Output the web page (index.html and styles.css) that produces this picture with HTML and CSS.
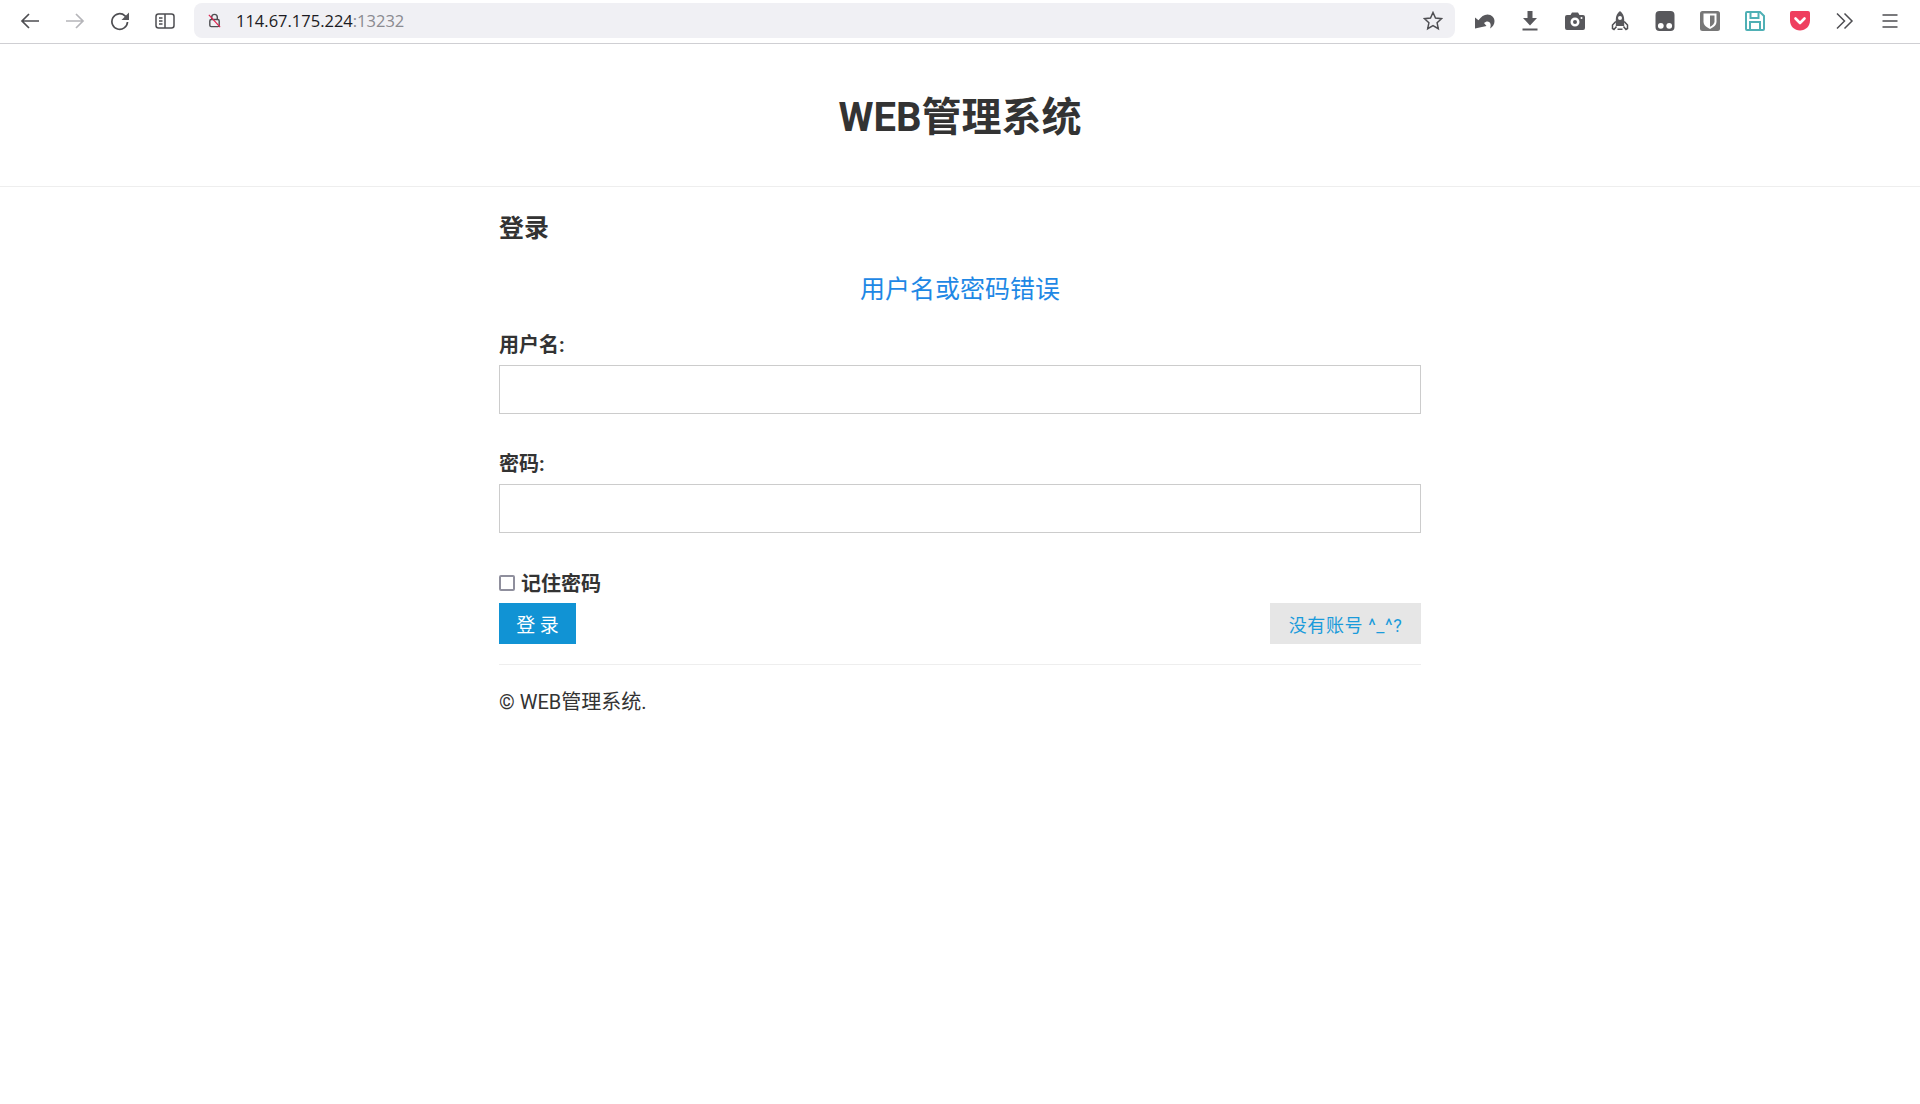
FILE: index.html
```html
<!DOCTYPE html>
<html lang="zh-CN">
<head>
<meta charset="utf-8">
<title>WEB管理系统</title>
<link rel="stylesheet" href="styles.css">
</head>
<body>
<nav class="toolbar">
  <div class="nav-group">
    <svg class="ico" viewBox="0 0 20 20"><path d="M19 10H2M9 3 2 10l7 7" class="st"/></svg>
    <svg class="ico" viewBox="0 0 20 20"><path d="M1 10h17M11 3l7 7-7 7" class="st light"/></svg>
    <svg class="ico" viewBox="0 0 20 20"><path d="M17.500 11a7.800 7.800 0 1 1-2.500-6.200L17.500 7.500" class="st"/><path d="M19 1.500v7.500h-7.500z" class="fill"/></svg>
    <svg class="ico" viewBox="0 0 20 20"><rect x="1" y="3" width="18" height="14" rx="2.500" class="st thin"/><path d="M10 3v14M4 7H7.500M4 10H7.500M4 13H7.500" class="st thin"/></svg>
  </div>
  <div class="urlbar">
    <svg class="lock" viewBox="0 0 16 16"><rect x="3" y="7" width="10" height="7.500" rx="1.500" class="st thin"/><path d="M5 7V4.500a3 3 0 0 1 6 0V7" class="st thin"/><path d="M2 2l12 13" class="slash"/></svg>
    <span class="host">114.67.175.224</span><span class="port">:13232</span>
    <svg class="ico star" viewBox="0 0 20 20"><path d="m10 1.500 2.500 5.500 6 .7-4.400 4.100 1.200 5.900-5.300-3-5.300 3 1.200-5.900L1.500 7.700l6-.7z" class="st thin"/></svg>
  </div>
  <div class="ext-group">
    <svg class="ico" viewBox="0 0 20 20"><path d="M0 17.500V6.500l3.500 2.800C6 5.800 9 3.500 12.500 3.500c4 0 7 3 7 6.500 0 3-1.500 5.500-4.500 7.500 1-2.500 1-5-.5-6.300-1.800-1.200-3.800-.7-5.500.9l2.500 2.800z" class="fill"/></svg>
    <svg class="ico" viewBox="0 0 20 20"><path d="M7.500 0h5v7H17l-7 7.500L3 7h4.500zM2.500 17.500h15v2h-15z" class="fill"/></svg>
    <svg class="ico" viewBox="0 0 20 20"><path fill-rule="evenodd" d="M7 1.500h6L14.500 4H18a2 2 0 0 1 2 2v11a2 2 0 0 1-2 2H2a2 2 0 0 1-2-2V6a2 2 0 0 1 2-2h3.500zM10 6.500a4.500 4.500 0 1 0 0 9 4.500 4.500 0 0 0 0-9zm0 2.500a2 2 0 1 1 0 4 2 2 0 0 1 0-4zM16.500 6a1 1 0 1 0 0 2 1 1 0 0 0 0-2z" class="fill"/></svg>
    <svg class="ico" viewBox="0 0 20 20"><path fill-rule="evenodd" d="M10 0c2.800 2 4.200 5 4.200 8.500V15H5.800V8.500C5.800 5 7.200 2 10 0zm0 5a2 2 0 1 0 0 4 2 2 0 0 0 0-4z" class="fill"/><path d="M5.800 10.500 2.500 14v3.500l1.500 1 2.500-3M14.200 10.500l3.300 3.500v3.500l-1.500 1-2.500-3" class="st thin"/><path d="M7.500 17.500h5V19h-5z" class="fill"/></svg>
    <svg class="ico" viewBox="0 0 20 20"><path d="M4.500 0h11A4 4 0 0 1 19.500 4v12a4 4 0 0 1-4 4h-11a4 4 0 0 1-4-4V4a4 4 0 0 1 4-4z" class="fill"/><circle cx="5.800" cy="14.800" r="2.900" fill="#fff"/><circle cx="14.200" cy="14.800" r="2.900" fill="#fff"/></svg>
    <svg class="ico" viewBox="0 0 20 20"><rect x="0" y="0" width="20" height="20" rx="2.500" fill="#777"/><path d="M3.500 2.500h13v8c0 3.500-2.800 5.800-6.500 7.500-3.700-1.700-6.500-4-6.500-7.500z" fill="#fff"/><path d="M10 4.500h4.500v6c0 2.300-1.900 3.900-4.500 5.200z" fill="#777"/></svg>
    <svg class="ico" viewBox="0 0 20 20"><path d="M2 1h13l4 4v13a1 1 0 0 1-1 1H2a1 1 0 0 1-1-1V2a1 1 0 0 1 1-1z" fill="none" stroke="#4fb0b5" stroke-width="2"/><path d="M5.500 1.500v5.500h8V1.500M5 18.500V11h10v7.500" fill="none" stroke="#4fb0b5" stroke-width="2"/></svg>
    <svg class="ico" viewBox="0 0 20 20"><path d="M2 0h16a2 2 0 0 1 2 2v7.500C20 15.300 15.500 19.500 10 19.500S0 15.300 0 9.500V2a2 2 0 0 1 2-2z" fill="#ef3f5f"/><path d="m5.500 7.500 4.500 4.500 4.500-4.500" fill="none" stroke="#fff" stroke-width="2.600" stroke-linecap="round" stroke-linejoin="round"/></svg>
    <svg class="ico" viewBox="0 0 20 20"><path d="m2 2.500 7.500 7.500L2 17.500M9.500 2.500 17 10l-7.500 7.500" class="st thin"/></svg>
    <svg class="ico" viewBox="0 0 20 20"><path d="M2.500 4h15M2.500 10h15M2.500 16h15" class="st"/></svg>
  </div>
</nav>

<header class="site-header">
  <h1 class="site-title">WEB管理系统</h1>
</header>

<main class="container">
  <h2 class="page-title">登录</h2>
  <p class="error">用户名或密码错误</p>
  <form class="login-form">
    <div class="field">
      <label class="field-label" for="username">用户名:</label>
      <input class="text-input" id="username" type="text">
    </div>
    <div class="field">
      <label class="field-label" for="password">密码:</label>
      <input class="text-input" id="password" type="password">
    </div>
    <label class="remember"><span class="check"></span>记住密码</label>
    <div class="actions">
      <button class="btn-primary" type="button">登 录</button>
      <a class="btn-secondary" href="#">没有账号 ^_^?</a>
    </div>
  </form>
  <footer class="site-footer">© WEB管理系统.</footer>
</main>
</body>
</html>
```

FILE: styles.css
```css
* { box-sizing: border-box; }
html, body { margin: 0; padding: 0; background: #fff; }
body {
  font-family: Roboto, "Noto Sans CJK SC", sans-serif;
  color: #333;
  height: 1104px;
  overflow: hidden;
}
.toolbar {
  height: 44px;
  border-bottom: 1px solid #cfcfd3;
  display: flex;
  align-items: center;
  padding: 0 0 2px 20px;
}
.nav-group { display: flex; gap: 25px; align-items: center; width: 174px; }
.ext-group { display: flex; gap: 25px; align-items: center; margin-left: 20px; }
.ico { width: 20px; height: 20px; flex: none; display: block; }
.st { fill: none; stroke: #4e4e52; stroke-width: 1.700; }
.thin { stroke-width: 1.500; }
.light { stroke: #b5b5b9; }
.fill { fill: #58585c; }
.slash { stroke: #e0224f; stroke-width: 1.300; fill: none; }
.urlbar {
  width: 1261px;
  height: 35px;
  background: #f0f0f4;
  border-radius: 8px;
  display: flex;
  align-items: center;
  padding: 0 12px 0 13px;
  font-family: "Open Sans", sans-serif;
  font-size: 16.500px;
}
.lock { width: 15px; height: 15px; margin-right: 14px; flex: none; }
.host { color: #1c1b22; }
.port { color: #8a8a90; }
.star { margin-left: auto; }
.site-header {
  height: 143px;
  border-bottom: 1px solid #eee;
  display: flex;
  align-items: center;
  justify-content: center;
}
.site-title {
  margin: 5px 0 0;
  font-size: 40px;
  line-height: 1.200;
  font-weight: 700;
  color: #333;
}
.container {
  width: 922px;
  margin: 0 auto;
  padding-top: 25px;
}
.page-title {
  margin: 0;
  font-size: 25px;
  line-height: 34px;
  font-weight: 700;
}
.error {
  margin: 25px 0 0;
  text-align: center;
  font-size: 25px;
  line-height: 38px;
  color: #1e88e5;
}
.login-form { margin-top: 21px; }
.field { margin-bottom: 35px; }
.field-label {
  display: block;
  font-size: 20px;
  font-weight: 700;
  line-height: 30px;
  margin-bottom: 5px;
}
.text-input {
  display: block;
  width: 100%;
  height: 49px;
  padding: 0 10px;
  border: 1px solid #ccc;
  border-radius: 0;
  background: #fff;
  outline: none;
}
.remember {
  display: flex;
  align-items: center;
  height: 30px;
  margin-top: -1px;
  font-size: 20px;
  font-weight: 700;
}
.check {
  width: 16px;
  height: 16px;
  border: 2px solid #8f8f9d;
  border-radius: 2px;
  background: #fff;
  margin: 2px 6px 0 0;
}
.actions {
  display: flex;
  justify-content: space-between;
  margin-top: 6px;
  padding-bottom: 20px;
  border-bottom: 1px solid #eee;
}
.btn-primary {
  width: 77px;
  height: 41px;
  border: 0;
  padding: 0;
  background: #1193d4;
  color: #fff;
  font: 19px Roboto, "Noto Sans CJK SC", sans-serif;
}
.btn-secondary {
  width: 151px;
  height: 41px;
  background: #e6e6e6;
  color: #1a9bdb;
  font-size: 18px;
  letter-spacing: 0.600px;
  display: flex;
  align-items: center;
  justify-content: center;
  text-decoration: none;
}
.site-footer {
  margin-top: 19px;
  font-size: 20px;
  line-height: 36px;
}
```
